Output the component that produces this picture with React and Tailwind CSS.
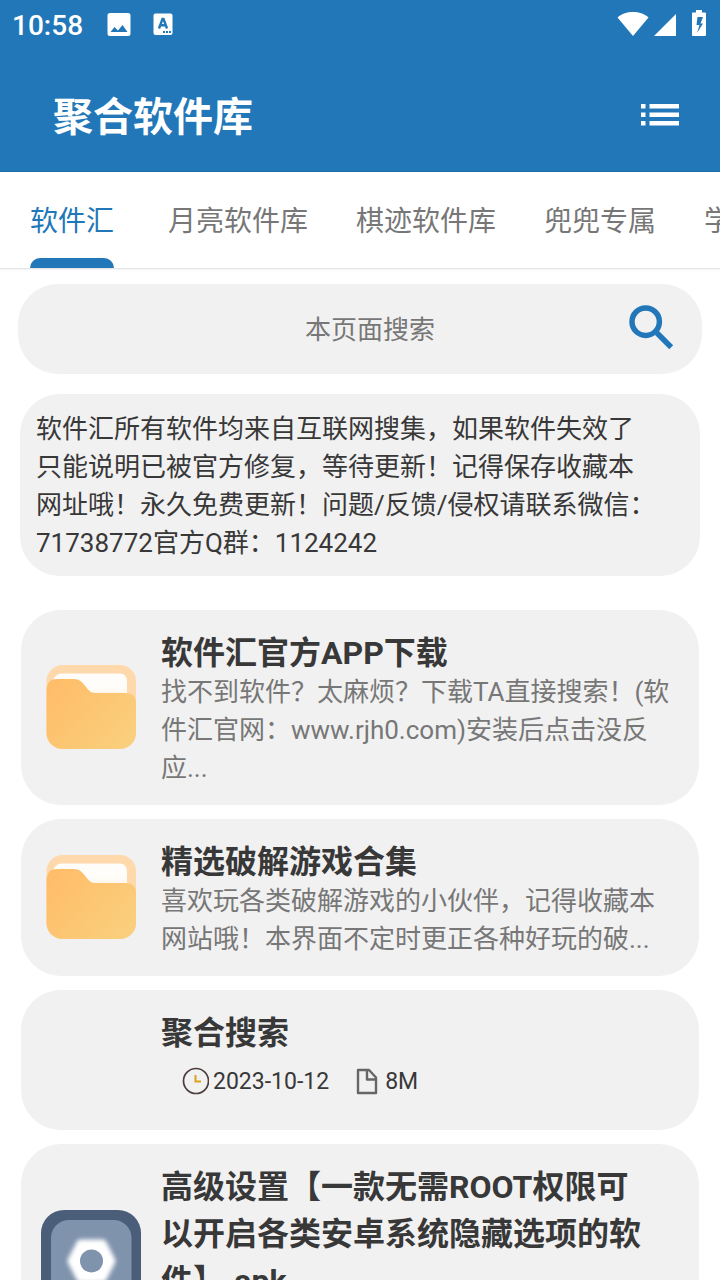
import React, { useState } from "react";

const tabs = ["软件汇", "月亮软件库", "棋迹软件库", "兜兜专属", "学习专区"];

const apps = [
  {
    id: 1,
    title: "软件汇官方APP下载",
    desc: "找不到软件？太麻烦？下载TA直接搜索！(软件汇官网：www.rjh0.com)安装后点击没反应...",
    icon: "folder",
  },
  {
    id: 2,
    title: "精选破解游戏合集",
    desc: "喜欢玩各类破解游戏的小伙伴，记得收藏本网站哦！本界面不定时更正各种好玩的破...",
    icon: "folder",
  },
  { id: 3, title: "聚合搜索", date: "2023-10-12", size: "8M" },
  {
    id: 4,
    title: "高级设置【一款无需ROOT权限可以开启各类安卓系统隐藏选项的软件】.apk",
    date: "2023-10-12",
    size: "2M",
    icon: "settings",
  },
];

function StatusBar() {
  return (
    <div className="flex h-12 items-center pr-[13px] pl-3 text-white">
      <span className="pt-1 text-[28px] leading-8 font-medium">10:58</span>
      <svg className="ml-6 h-6 w-6" viewBox="0 0 24 24" fill="currentColor">
        <path
          fillRule="evenodd"
          d="M3 1h18a2.500 2.500 0 0 1 2.500 2.500v18a2.500 2.500 0 0 1-2.500 2.500H3a2.500 2.500 0 0 1-2.500-2.500v-18A2.500 2.500 0 0 1 3 1zM3.500 20h17l-5-7-4.500 5.500-3.500-3.500z"
        />
      </svg>
      <svg className="ml-5 h-6 w-6" viewBox="0 0 24 24" fill="none">
        <rect x="2.500" y="1.500" width="19" height="21.500" rx="2" fill="#fff" />
        <path d="M8 16.500L11.500 7h1L16 16.500M9.300 13.300h5.400" stroke="#2277b8" strokeWidth="2.400" />
        <path d="M12 19h2v2h-2zM15 19h2v2h-2zM18 19h2v2h-2z" fill="#2277b8" />
      </svg>
      <svg className="ml-auto h-7 w-8" viewBox="0 0 32 28" fill="currentColor">
        <path d="M16 26L.500 7.500C5 3.500 10 2 16 2s11 1.500 15.500 5.500z" />
      </svg>
      <svg className="ml-1 h-7 w-6" viewBox="0 0 24 28" fill="currentColor">
        <path d="M23 4v22H1z" />
      </svg>
      <svg className="ml-3.5 h-7 w-4" viewBox="0 0 16 28" fill="currentColor">
        <path
          fillRule="evenodd"
          d="M5 0h6v2.500h3q1 0 1 1V25q0 1-1 1H2q-1 0-1-1V3.500q0-1 1-1h3zM6.500 7L5.500 15h3L6 23l6-9.500H9.500L12 7z"
        />
      </svg>
    </div>
  );
}

function ListIcon() {
  return (
    <svg className="h-6 w-10" viewBox="0 0 40 24" fill="currentColor">
      <path d="M1 1h4.500v4.500H1zM9.500 1H39v4.500H9.500zM1 9.500h4.500V14H1zM9.500 9.500H39V14H9.500zM1 18h4.500v4.500H1zM9.500 18H39v4.500H9.500z" />
    </svg>
  );
}

function SearchIcon() {
  return (
    <svg className="h-12 w-12" viewBox="0 0 48 48" fill="none" stroke="#2277b8" strokeWidth="5.500">
      <circle cx="19.700" cy="16.700" r="13.700" />
      <path d="M31 28L45.200 42.300" />
    </svg>
  );
}

function FolderIcon() {
  return (
    <svg className="h-[100px] w-[100px]" viewBox="0 0 100 100">
      <defs>
        <linearGradient id="front" x1="0" y1="0.2" x2="1" y2="0.9">
          <stop offset="0" stopColor="#ffbd69" />
          <stop offset="1" stopColor="#f9d07e" />
        </linearGradient>
        <linearGradient id="paper" x1="0" y1="0" x2="0" y2="1">
          <stop offset="0.6" stopColor="#fffdfa" />
          <stop offset="1" stopColor="#fff1e2" />
        </linearGradient>
      </defs>
      <rect x="5.500" y="8" width="89.500" height="84" rx="16" fill="#ffd9ab" />
      <path d="M12 24q2-7.500 9-7.500h57q8 0 8 8V40H12z" fill="url(#paper)" />
      <path
        d="M5.500 33Q6 22 16 22h17c6 0 9 4 12 8 4 5 5 6 11 6h28c7 0 11 3 11 10v30a16 16 0 0 1-16 16H21.500a16 16 0 0 1-16-16z"
        fill="url(#front)"
      />
    </svg>
  );
}

function SettingsIcon() {
  return (
    <svg className="h-[100px] w-[100px]" viewBox="0 0 100 100">
      <defs>
        <filter id="glow" x="-20%" y="-20%" width="140%" height="140%">
          <feGaussianBlur stdDeviation="2" />
        </filter>
      </defs>
      <rect width="100" height="100" rx="23" fill="#4a5e79" />
      <rect x="10" y="10" width="80.500" height="80" rx="18" fill="#8093ad" />
      <path
        d="M39 29.500h23q2 0 3 2l9 17.500q1 2 0 4l-9 17.500q-1 2-3 2H39q-2 0-3-2L27 53q-1-2 0-4l9-17.500q1-2 3-2z"
        fill="#fff"
        filter="url(#glow)"
      />
      <circle cx="50.500" cy="51" r="11.500" fill="#8093ad" />
    </svg>
  );
}

function AppMeta({ date, size }) {
  return (
    <div className="-mt-1 flex h-[59px] items-center pl-5 text-[23px] text-[#383838]">
      <svg className="mb-1 h-7 w-7" viewBox="0 0 28 28" fill="none">
        <circle cx="15" cy="14" r="12.500" stroke="#4e3d3d" strokeWidth="1.700" />
        <path d="M14.500 8v6.500H20" stroke="#dca21c" strokeWidth="2" />
      </svg>
      <span className="ml-1">{date}</span>
      <svg className="mb-1 ml-[26px] h-7 w-6" viewBox="0 0 24 28" fill="none" stroke="#666" strokeWidth="2.400">
        <path d="M3 3h11l7 7.500V26H3zM12 3v9.500h9" strokeLinejoin="round" />
      </svg>
      <span className="ml-1.5">{size}</span>
    </div>
  );
}

function AppCard({ app }) {
  return (
    <li className="flex items-center rounded-[40px] bg-[#f1f1f1] pt-5 pr-7 pb-[18px] pl-5">
      <div className="mb-1 flex w-[100px] shrink-0 justify-center">
        {app.icon === "folder" && <FolderIcon />}
        {app.icon === "settings" && <SettingsIcon />}
      </div>
      <div className="ml-5 min-w-0 flex-1">
        <h2 className="pr-4 text-[32px] leading-[47px] font-bold text-[#383838]">{app.title}</h2>
        {app.desc && <p className="-mt-1 text-[26px] leading-[38px] text-[#777]">{app.desc}</p>}
        {app.date && <AppMeta date={app.date} size={app.size} />}
      </div>
    </li>
  );
}

export default function App() {
  const [active, setActive] = useState(0);
  const [keyword, setKeyword] = useState("");

  return (
    <div className="h-screen overflow-hidden bg-white font-[Roboto,'Noto_Sans_CJK_SC',sans-serif]">
      <header className="border-b border-[#1f69a5] bg-[#2277b8]">
        <StatusBar />
        <div className="flex h-[123px] items-center justify-between pt-2.5 pr-10 pl-[53px] text-white">
          <h1 className="pt-1.5 text-[40px] leading-[56px] font-bold">聚合软件库</h1>
          <button aria-label="菜单">
            <ListIcon />
          </button>
        </div>
      </header>

      <nav className="flex h-[97px] gap-12 overflow-hidden border-b border-[#e5e5e5] pl-[30px] shadow-xs">
        {tabs.map((tab, i) => (
          <button
            key={tab}
            onClick={() => setActive(i)}
            className={`flex shrink-0 flex-col justify-between pt-[30px] text-[28px] leading-10 whitespace-nowrap first:mr-1.5 ${
              active === i ? "text-[#2277b8]" : "text-[#777]"
            }`}
          >
            {tab}
            {active === i && <span className="h-2.5 w-full rounded-t-[10px] bg-[#2277b8]" />}
          </button>
        ))}
      </nav>

      <main>
        <form
          onSubmit={(e) => e.preventDefault()}
          className="mx-[18px] mt-[15px] flex h-[90px] items-center rounded-[40px] bg-[#f1f1f1] pr-7 pl-24"
        >
          <input
            type="text"
            aria-label="本页面搜索"
            placeholder="本页面搜索"
            value={keyword}
            onChange={(e) => setKeyword(e.target.value)}
            className="min-w-0 flex-1 pt-0.5 text-center text-[26px] leading-[38px] text-[#383838] outline-none placeholder:text-[#777]"
          />
          <button type="submit" aria-label="搜索">
            <SearchIcon />
          </button>
        </form>

        <p className="mx-5 mt-5 rounded-[40px] bg-[#f1f1f1] pt-4 pr-11 pb-3.5 pl-4 text-[26px] leading-[38px] text-[#383838]">
          软件汇所有软件均来自互联网搜集，如果软件失效了只能说明已被官方修复，等待更新！记得保存收藏本网址哦！永久免费更新！问题/反馈/侵权请联系微信：71738772官方Q群：1124242
        </p>

        <ul className="mx-[21px] mt-[34px] flex flex-col gap-3.5">
          {apps.map((app) => (
            <AppCard key={app.id} app={app} />
          ))}
        </ul>
      </main>
    </div>
  );
}
